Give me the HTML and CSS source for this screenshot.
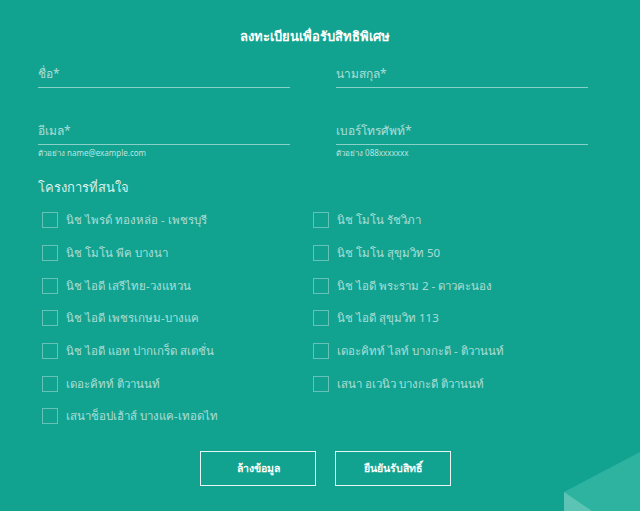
FILE: index.html
```html
<!DOCTYPE html>
<html lang="th">
<head>
<meta charset="utf-8">
<link rel="stylesheet" href="styles.css">
</head>
<body>
<div class="page">
  <div class="deco">
    <svg width="640" height="511" viewBox="0 0 640 511">
      <polygon points="564,492 640,452 640,511 564,511" fill="#2db3a0"/>
      <polygon points="564,492 592,511 564,511" fill="#5cc4b4"/>
    </svg>
  </div>
  <form class="form">
    <h1 class="title">ลงทะเบียนเพื่อรับสิทธิพิเศษ</h1>
    <div class="fields">
      <div class="field">
        <div class="label">ชื่อ*</div>
      </div>
      <div class="field">
        <div class="label">นามสกุล*</div>
      </div>
      <div class="field">
        <div class="label">อีเมล*</div>
        <div class="hint">ตัวอย่าง name@example.com</div>
      </div>
      <div class="field">
        <div class="label">เบอร์โทรศัพท์*</div>
        <div class="hint">ตัวอย่าง 088xxxxxxx</div>
      </div>
    </div>
    <div class="section">โครงการที่สนใจ</div>
    <div class="checks">
      <label class="check"><span class="box"></span>นิช ไพรด์ ทองหล่อ - เพชรบุรี</label>
      <label class="check"><span class="box"></span>นิช โมโน รัชวิภา</label>
      <label class="check"><span class="box"></span>นิช โมโน พีค บางนา</label>
      <label class="check"><span class="box"></span>นิช โมโน สุขุมวิท 50</label>
      <label class="check"><span class="box"></span>นิช ไอดี เสรีไทย-วงแหวน</label>
      <label class="check"><span class="box"></span>นิช ไอดี พระราม 2 - ดาวคะนอง</label>
      <label class="check"><span class="box"></span>นิช ไอดี เพชรเกษม-บางแค</label>
      <label class="check"><span class="box"></span>นิช ไอดี สุขุมวิท 113</label>
      <label class="check"><span class="box"></span>นิช ไอดี แอท ปากเกร็ด สเตชั่น</label>
      <label class="check"><span class="box"></span>เดอะคิทท์ ไลท์ บางกะดี - ติวานนท์</label>
      <label class="check"><span class="box"></span>เดอะคิทท์ ติวานนท์</label>
      <label class="check"><span class="box"></span>เสนา อเวนิว บางกะดี ติวานนท์</label>
      <label class="check"><span class="box"></span>เสนาช็อปเฮ้าส์ บางแค-เทอดไท</label>
    </div>
    <div class="actions">
      <button type="button" class="btn">ล้างข้อมูล</button>
      <button type="button" class="btn">ยืนยันรับสิทธิ์</button>
    </div>
  </form>
</div>
</body>
</html>
```
FILE: styles.css
```css
html, body {
  margin: 0;
  padding: 0;
}
body {
  background: #12a390;
  font-family: "Noto Sans", "DejaVu Sans", sans-serif;
  color: #fff;
  width: 640px;
  height: 511px;
  overflow: hidden;
}
.page {
  position: relative;
  width: 640px;
  height: 511px;
}
.deco {
  position: absolute;
  left: 0;
  top: 0;
  width: 640px;
  height: 511px;
  pointer-events: none;
}
.form {
  position: relative;
  padding: 25px 0 0 38px;
  width: 550px;
}
.title {
  margin: 0;
  text-align: center;
  font-size: 13px;
  font-weight: 700;
  line-height: 22px;
  padding-left: 4px;
  color: #fff;
}
.fields {
  display: grid;
  grid-template-columns: 252px 252px;
  column-gap: 46px;
  margin-top: 19px;
}
.field {
  height: 57px;
}
.label {
  font-size: 12px;
  line-height: 16px;
  color: rgba(255, 255, 255, 0.65);
  padding-bottom: 5px;
  border-bottom: 1px solid rgba(255, 255, 255, 0.5);
}
.hint {
  font-size: 8px;
  line-height: 12px;
  margin-top: 2px;
  color: rgba(255, 255, 255, 0.72);
}
.section {
  margin-top: -2px;
  font-size: 13px;
  line-height: 18px;
  color: rgba(255, 255, 255, 0.85);
}
.checks {
  display: grid;
  grid-template-columns: 271px 250px;
  grid-auto-rows: 32.7px;
  margin-top: 8px;
  padding-left: 4px;
}
.check {
  display: flex;
  align-items: center;
  gap: 8px;
  font-size: 11.5px;
  color: rgba(255, 255, 255, 0.65);
}
.box {
  width: 14px;
  height: 14px;
  border: 1px solid rgba(255, 255, 255, 0.35);
  flex: none;
}
.actions {
  display: flex;
  gap: 19px;
  margin-top: 18px;
  margin-left: 162px;
}
.btn {
  width: 116px;
  height: 35px;
  background: transparent;
  border: 1px solid rgba(255, 255, 255, 0.9);
  color: #fff;
  font-family: inherit;
  font-size: 10.5px;
  font-weight: 700;
  padding: 0;
}
```
